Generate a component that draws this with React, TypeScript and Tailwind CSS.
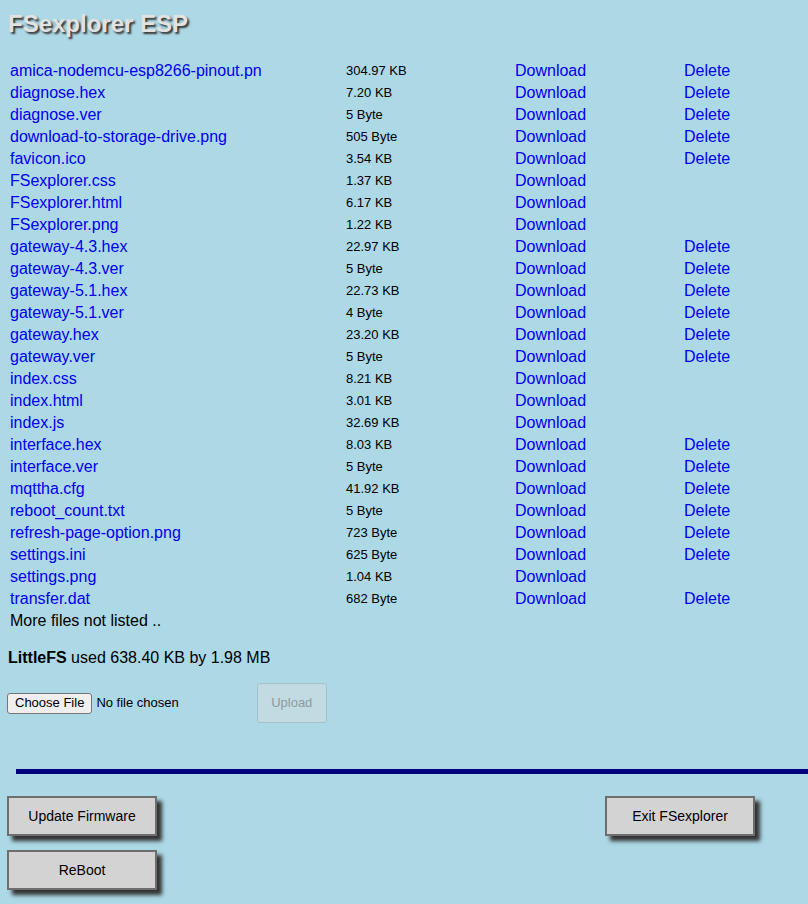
import React from 'react';

type FileRow = { name: string; size: string; del: boolean };

const files: FileRow[] = [
  { name: 'amica-nodemcu-esp8266-pinout.pn', size: '304.97 KB', del: true },
  { name: 'diagnose.hex', size: '7.20 KB', del: true },
  { name: 'diagnose.ver', size: '5 Byte', del: true },
  { name: 'download-to-storage-drive.png', size: '505 Byte', del: true },
  { name: 'favicon.ico', size: '3.54 KB', del: true },
  { name: 'FSexplorer.css', size: '1.37 KB', del: false },
  { name: 'FSexplorer.html', size: '6.17 KB', del: false },
  { name: 'FSexplorer.png', size: '1.22 KB', del: false },
  { name: 'gateway-4.3.hex', size: '22.97 KB', del: true },
  { name: 'gateway-4.3.ver', size: '5 Byte', del: true },
  { name: 'gateway-5.1.hex', size: '22.73 KB', del: true },
  { name: 'gateway-5.1.ver', size: '4 Byte', del: true },
  { name: 'gateway.hex', size: '23.20 KB', del: true },
  { name: 'gateway.ver', size: '5 Byte', del: true },
  { name: 'index.css', size: '8.21 KB', del: false },
  { name: 'index.html', size: '3.01 KB', del: false },
  { name: 'index.js', size: '32.69 KB', del: false },
  { name: 'interface.hex', size: '8.03 KB', del: true },
  { name: 'interface.ver', size: '5 Byte', del: true },
  { name: 'mqttha.cfg', size: '41.92 KB', del: true },
  { name: 'reboot_count.txt', size: '5 Byte', del: true },
  { name: 'refresh-page-option.png', size: '723 Byte', del: true },
  { name: 'settings.ini', size: '625 Byte', del: true },
  { name: 'settings.png', size: '1.04 KB', del: false },
  { name: 'transfer.dat', size: '682 Byte', del: true },
];

// grey box buttons with the heavy drop shadow
const BigButton = ({ label }: { label: string }) => (
  <button className="w-[150px] h-[40px] bg-[#d3d3d3] border-2 border-[#6e6e6e] text-[14px] text-black shadow-[5px_5px_4px_#333]">
    {label}
  </button>
);

export default function App() {
  return (
    <div
      className="min-h-[904px] bg-[#add8e6] text-black"
      style={{ fontFamily: '"Liberation Sans", Arial, sans-serif' }}
    >
      <div className="px-[8px] pt-[10px]">
        <h1 className="text-[24px] font-bold leading-[28px] text-[#e2e2e2] [text-shadow:2px_2px_2px_#333]">
          FSexplorer ESP
        </h1>

        {/* file list */}
        <div className="mt-[22px] flex flex-col">
          {files.map((f) => (
            <div key={f.name} className="flex h-[22px] items-center">
              <a className="w-[338px] pl-[2px] text-[16px] text-[#0000ee] whitespace-nowrap overflow-hidden">
                {f.name}
              </a>
              <span className="w-[169px] text-[13px]">{f.size}</span>
              <a className="w-[169px] text-[16px] text-[#0000ee]">Download</a>
              {f.del && <a className="text-[16px] text-[#0000ee]">Delete</a>}
            </div>
          ))}
          <div className="flex h-[22px] items-center pl-[2px] text-[16px]">More files not listed ..</div>
        </div>

        <p className="mt-[14px] text-[16px]">
          <b>LittleFS</b> used 638.40 KB by 1.98 MB
        </p>

        {/* upload form */}
        <div className="mt-[13px] flex items-center">
          <div className="-ml-[1px] flex items-center text-[13px]">
            <span className="h-[21px] px-[7px] flex items-center bg-[#efefef] border border-[#767676] rounded-[3px] text-black">
              Choose File
            </span>
            <span className="ml-[4px]">No file chosen</span>
          </div>
          <button
            disabled
            className="ml-[78px] w-[70px] h-[40px] bg-[#c2dbe2] border border-[#a8c1c8] rounded-[3px] text-[13px] text-[#8c9aa0]"
          >
            Upload
          </button>
        </div>
      </div>

      <div className="mt-[46px] ml-[16px] h-[5px] bg-[#000080]" />

      {/* actions */}
      <div className="mt-[22px] px-[7px] flex flex-col gap-[14px]">
        <div className="flex">
          <BigButton label="Update Firmware" />
          <div className="ml-[448px]">
            <BigButton label="Exit FSexplorer" />
          </div>
        </div>
        <div className="flex">
          <BigButton label="ReBoot" />
        </div>
      </div>
    </div>
  );
}
